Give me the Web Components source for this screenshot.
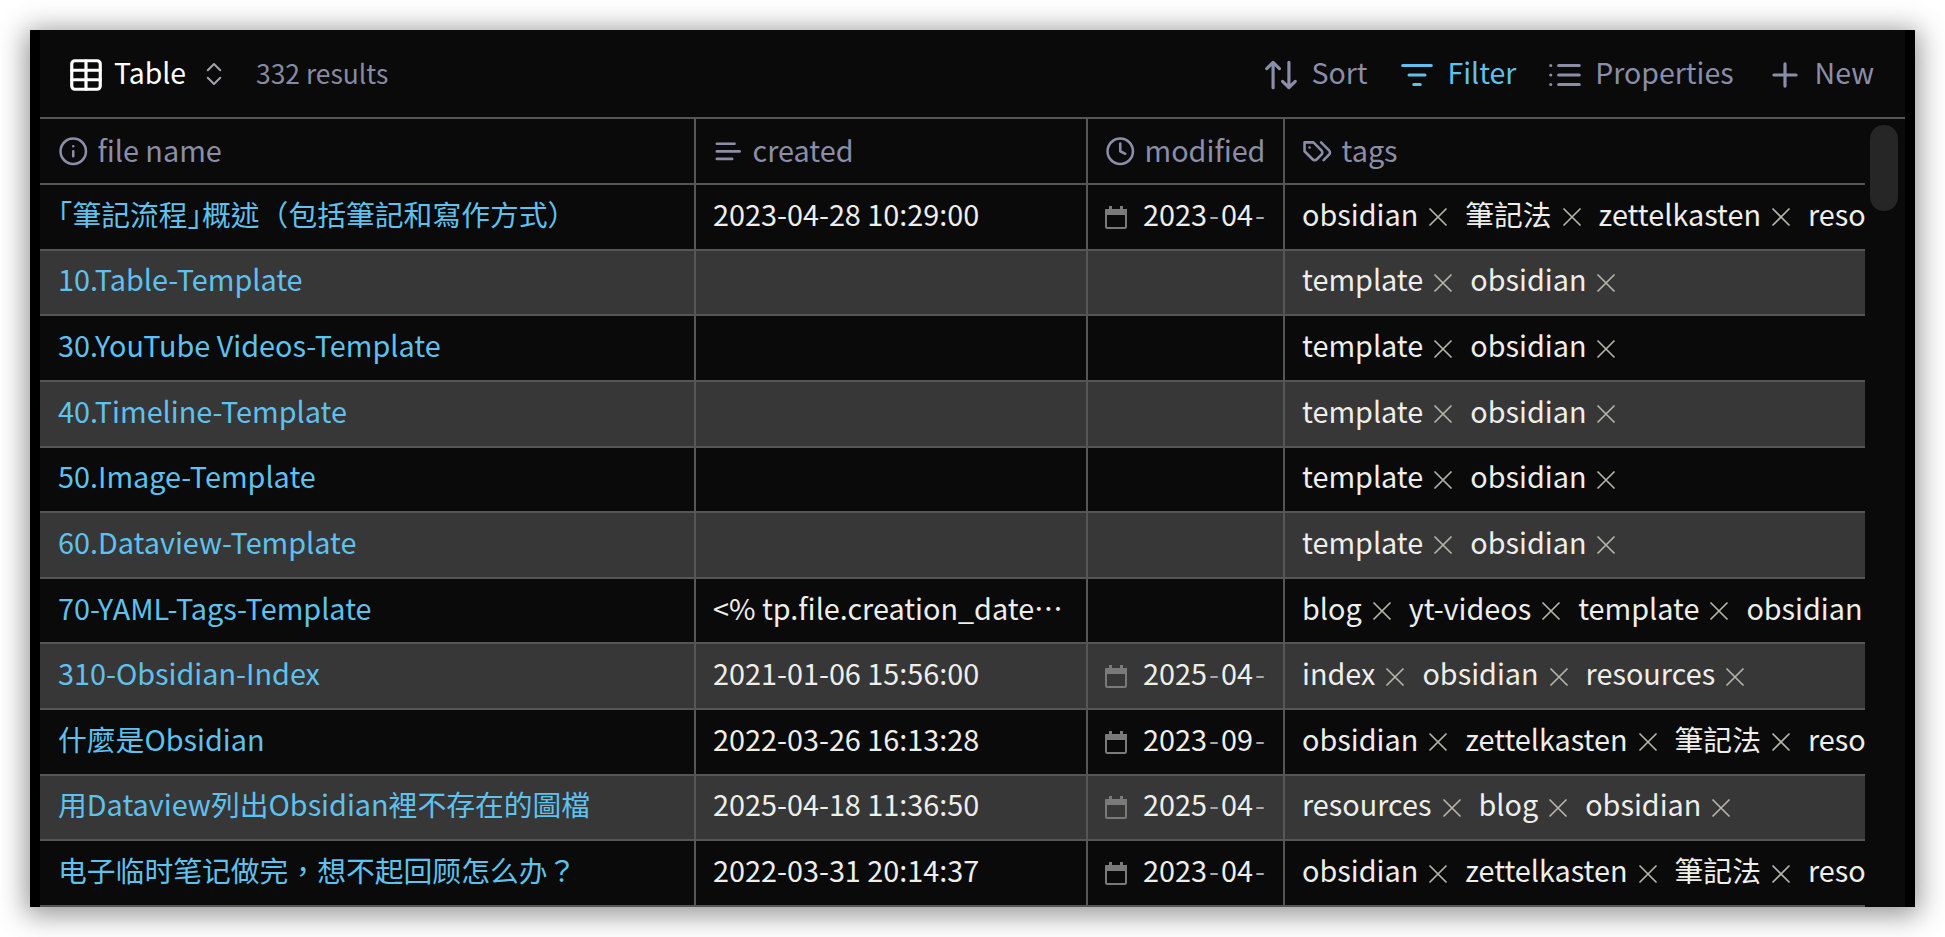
<!DOCTYPE html>
<html lang="zh-Hant"><head><meta charset="utf-8">
<style>
html,body{margin:0;background:#fff;height:100%;overflow:hidden}
body{font-family:"Noto Sans CJK TC","Noto Sans",sans-serif;font-size:28.8px;color:#eeeeea}
</style></head><body>
<base-view></base-view>
<script>
const ICONS={
 table:'<rect x="3" y="3" width="18" height="18" rx="2"/><path d="M12 3v18M3 9h18M3 15h18"/>',
 updown:'<path d="m7 15 5 5 5-5M7 9l5-5 5 5"/>',
 sort:'<path d="m3 8 4-4 4 4M7 4v16M21 16l-4 4-4-4M17 20V4"/>',
 filter:'<path d="M3 6h18M7 12h10M10 18h4"/>',
 list:'<path d="M8 6h13M8 12h13M8 18h13M3 6h.01M3 12h.01M3 18h.01"/>',
 plus:'<path d="M5 12h14M12 5v14"/>',
 info:'<circle cx="12" cy="12" r="10"/><path d="M12 16v-4M12 8h.01"/>',
 text:'<path d="M17 6.1H3M21 12.1H3M15.1 18H3"/>',
 clock:'<circle cx="12" cy="12" r="10"/><path d="M12 6v6l4 2"/>',
 tags:'<path d="M9 5H2v7l6.29 6.29c.94.94 2.48.94 3.42 0l3.58-3.58c.94-.94.94-2.48 0-3.42L9 5Z"/><path d="M6 9.01V9M15 5l6.3 6.3a2.4 2.4 0 0 1 0 3.4L17 19"/>'
};
class VIcon extends HTMLElement{
 connectedCallback(){
  const s=this.getAttribute('size')||32, w=this.getAttribute('weight')||2;
  this.attachShadow({mode:'open'}).innerHTML=`<style>:host{display:inline-flex;flex:none}svg{display:block;fill:none;stroke:currentColor;stroke-linecap:round;stroke-linejoin:round}</style><svg width="${s}" height="${s}" viewBox="0 0 24 24" stroke-width="${w}">${ICONS[this.getAttribute('name')]}</svg>`;
 }
}
customElements.define('v-icon',VIcon);

class CalIcon extends HTMLElement{
 connectedCallback(){
  this.attachShadow({mode:'open'}).innerHTML=`<style>:host{display:inline-flex;flex:none;color:#7a7a7a;margin-top:7px}svg{display:block}</style><svg width="22" height="24" viewBox="0 0 22 24"><path fill="currentColor" d="M1 4h3V1h3v3h8V1h3v3h3a1 1 0 0 1 1 0v6H0V5a1 1 0 0 1 1-1Z"/><rect x="1" y="5" width="20" height="18" rx="1.5" fill="none" stroke="currentColor" stroke-width="2"/></svg>`;
 }
}
customElements.define('cal-icon',CalIcon);

class ToolBtn extends HTMLElement{
 connectedCallback(){
  const c=this.getAttribute('icon');
  this.attachShadow({mode:'open'}).innerHTML=`<style>:host{display:inline-flex;align-items:center;gap:11px;color:#8b8ea8}:host([active]){color:#5fc1ee}.l{margin-bottom:5px}v-icon{margin-top:2px}</style><v-icon name="${c}" size="38"></v-icon><span class="l"><slot></slot></span>`;
 }
}
customElements.define('tool-btn',ToolBtn);

class ViewToolbar extends HTMLElement{
 connectedCallback(){
  this.attachShadow({mode:'open'}).innerHTML=`<style>
  :host{display:flex;align-items:center;height:87px;padding:0 31px 0 27px;font-size:28.5px;color:#8b8ea8;flex:none}
  .t{display:inline-flex;align-items:center;color:#fff;font-size:28.4px}
  .t span{margin:0 13px 5px 9px}
  .t v-icon:first-child{margin-top:2px}
  .t v-icon:last-child{color:#a2a2aa}
  .c{margin-left:27px;color:#878aa0;font-size:26.4px;margin-bottom:3px}
  .r{margin-left:auto;display:flex;gap:30px;align-items:center}
  .r tool-btn:first-child{margin-right:1px}
  .r tool-btn:last-child{margin-left:2px}
  </style>
  <div class="t"><v-icon name="table" size="38"></v-icon><span>Table</span><v-icon name="updown" size="30" weight="1.6"></v-icon></div>
  <div class="c">332 results</div>
  <div class="r"><tool-btn icon="sort">Sort</tool-btn><tool-btn icon="filter" active>Filter</tool-btn><tool-btn icon="list">Properties</tool-btn><tool-btn icon="plus">New</tool-btn></div>`;
 }
}
customElements.define('view-toolbar',ViewToolbar);

class TagChip extends HTMLElement{
 connectedCallback(){
  this.attachShadow({mode:'open'}).innerHTML=`<style>:host{display:inline-flex;align-items:center;flex:none;margin-right:17px}svg{margin:8px 0 0 10px;display:block;stroke:#b5b4a9;stroke-width:1.7;fill:none}</style><slot></slot><svg width="20" height="20" viewBox="0 0 20 20"><path d="M1.5 1.5l17 17M18.5 1.5l-17 17"/></svg>`;
 }
}
customElements.define('tag-chip',TagChip);

class DbCell extends HTMLElement{
 connectedCallback(){
  this.attachShadow({mode:'open'}).innerHTML=`<style>
  :host{display:flex;align-items:center;min-width:0;overflow:hidden;white-space:nowrap;padding:0 0 7px 17px;box-sizing:border-box;border-left:2px solid #565656}
  :host(:first-child){border-left:0;padding-left:18px}
  :host([link]){color:#5fc1ee}
  :host([head]){color:#8b8ea8;padding-bottom:4px}
  </style><slot></slot>`;
 }
}
customElements.define('db-cell',DbCell);

class DbRow extends HTMLElement{
 connectedCallback(){
  this.attachShadow({mode:'open'}).innerHTML=`<style>
  :host{display:grid;grid-template-columns:654px 392px 197px 582px;height:65.63px;box-sizing:border-box;border-bottom:2px solid #565656;background:#0a0a0a}
  :host([alt]){background:#373737}
  </style><slot></slot>`;
 }
}
customElements.define('db-row',DbRow);

const A=['template','obsidian'];
const OZ=['obsidian','zettelkasten','筆記法','resources'];
const H='font-feature-settings:&quot;halt&quot;';
const ROWS=[
[`<span style="${H}">「</span>筆記流程<span style="${H}">」</span>概述（包括筆記和寫作方式）`,'2023-04-28 10:29:00','2023-04-',['obsidian','筆記法','zettelkasten','resources']],
['10.Table-Template','','',A],
['30.YouTube Videos-Template','','',A],
['40.Timeline-Template','','',A],
['50.Image-Template','','',A],
['60.Dataview-Template','','',A],
['70-YAML-Tags-Template','&lt;% tp.file.creation_date…','',['blog','yt-videos','template','obsidian']],
['310-Obsidian-Index','2021-01-06 15:56:00','2025-04-',['index','obsidian','resources']],
['什麼是Obsidian','2022-03-26 16:13:28','2023-09-',OZ],
['用Dataview列出Obsidian裡不存在的圖檔','2025-04-18 11:36:50','2025-04-',['resources','blog','obsidian']],
['电子临时笔记做完，想不起回顾怎么办？','2022-03-31 20:14:37','2023-04-',OZ]
];
const mod=d=>d?`<cal-icon></cal-icon><span style="margin-left:16px">${d.replace(/-/g,'<span style="margin:0 2px;color:#a8a8a8">-</span>')}</span>`:'';
const hd=(i,t)=>`<v-icon name="${i}" size="30.5" style="margin-top:4px"></v-icon><span style="margin-left:9px">${t}</span>`;

class DbTable extends HTMLElement{
 connectedCallback(){
  let h=`<db-row style="height:66px">
   <db-cell head>${hd('info','file name')}</db-cell><db-cell head>${hd('text','created')}</db-cell><db-cell head>${hd('clock','modified')}</db-cell><db-cell head>${hd('tags','tags')}</db-cell></db-row>`;
  ROWS.forEach((r,i)=>{
   h+=`<db-row ${i%2?'alt':''}><db-cell link>${r[0]}</db-cell><db-cell>${r[1]}</db-cell><db-cell>${mod(r[2])}</db-cell><db-cell>${r[3].map(t=>`<tag-chip>${t}</tag-chip>`).join('')}</db-cell></db-row>`;
  });
  this.attachShadow({mode:'open'}).innerHTML=`<style>
  :host{display:block;flex:1;min-height:0;overflow:hidden;position:relative;background:#0a0a0a;border-top:2px solid #565656}
  .thumb{position:absolute;right:7px;top:6px;width:28px;height:86px;border-radius:14px;background:#262626}
  .clip{width:1825px;height:100%;overflow:hidden}
  </style><div class="clip">${h}</div><div class="thumb"></div>`;
 }
}
customElements.define('db-table',DbTable);

class BaseView extends HTMLElement{
 connectedCallback(){
  this.attachShadow({mode:'open'}).innerHTML=`<style>
  :host{display:flex;margin:30px;height:877px;box-sizing:border-box;background:#000;box-shadow:0 4px 26px 4px rgba(0,0,0,.42);overflow:hidden}
  .main{flex:1;min-width:0;display:flex;flex-direction:column;margin:0 10px;background:#0a0a0a}
  </style><div class="main"><view-toolbar></view-toolbar><db-table></db-table></div>`;
 }
}
customElements.define('base-view',BaseView);
</script>
</body></html>
